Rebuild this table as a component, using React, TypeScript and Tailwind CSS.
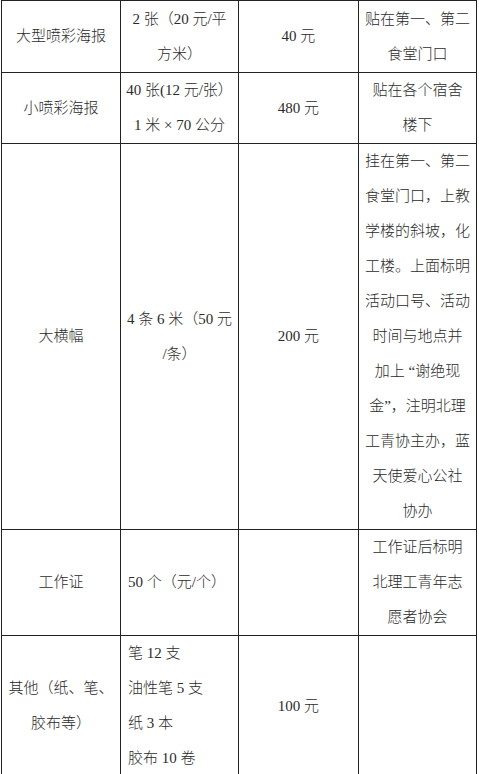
const rows = [
  {
    h: 'h-[72px]',
    name: ['大型喷彩海报'],
    spec: ['2 张（20 元/平', '方米）'],
    specAlign: 'center',
    cost: '40 元',
    note: ['贴在第一、第二', '食堂门口'],
  },
  {
    h: 'h-[70px]',
    name: ['小喷彩海报'],
    spec: ['40 张(12 元/张）', '1 米 × 70 公分'],
    specAlign: 'center',
    cost: '480 元',
    note: ['贴在各个宿舍', '楼下'],
  },
  {
    h: 'h-[385px]',
    name: ['大横幅'],
    spec: ['4 条 6 米（50 元', '/条）'],
    specAlign: 'center',
    cost: '200 元',
    note: [
      '挂在第一、第二',
      '食堂门口，上教',
      '学楼的斜坡，化',
      '工楼。上面标明',
      '活动口号、活动',
      '时间与地点并',
      '加上 “谢绝现',
      '金”，注明北理',
      '工青协主办，蓝',
      '天使爱心公社',
      '协办',
    ],
  },
  {
    h: 'h-[105px]',
    name: ['工作证'],
    spec: ['50 个（元/个）'],
    specAlign: 'left',
    cost: '',
    note: ['工作证后标明', '北理工青年志', '愿者协会'],
  },
  {
    h: 'h-[141px]',
    name: ['其他（纸、笔、', '胶布等）'],
    spec: ['笔 12 支', '油性笔 5 支', '纸 3 本', '胶布 10 卷'],
    specAlign: 'left',
    cost: '100 元',
    note: [],
  },
];

function Lines({ lines }: { lines: string[] }) {
  return (
    <>
      {lines.map((l, i) => (
        <div key={i} className="whitespace-nowrap">
          {l}
        </div>
      ))}
    </>
  );
}

export default function App() {
  return (
    <div className="w-[479px] min-h-[774px] bg-white font-['Liberation_Serif','Noto_Sans_CJK_SC',serif] text-[15px] font-light leading-[35px] text-[#2b2b2b]">
      <table className="ml-px table-fixed border-collapse">
        <colgroup>
          <col className="w-[119px]" />
          <col className="w-[118px]" />
          <col className="w-[120px]" />
          <col className="w-[118px]" />
        </colgroup>
        <tbody>
          {rows.map((r, i) => (
            <tr key={i} className={r.h}>
              <td className="border border-[#222] p-0 text-center align-middle">
                <Lines lines={r.name} />
              </td>
              <td
                className={
                  r.specAlign === 'left'
                    ? 'border border-[#222] p-0 pl-[7px] text-left align-middle'
                    : 'border border-[#222] p-0 text-center align-middle'
                }
              >
                <Lines lines={r.spec} />
              </td>
              <td className="border border-[#222] p-0 text-center align-middle">
                {r.cost}
              </td>
              <td className="border border-[#222] p-0 text-center align-middle">
                <Lines lines={r.note} />
              </td>
            </tr>
          ))}
        </tbody>
      </table>
    </div>
  );
}
